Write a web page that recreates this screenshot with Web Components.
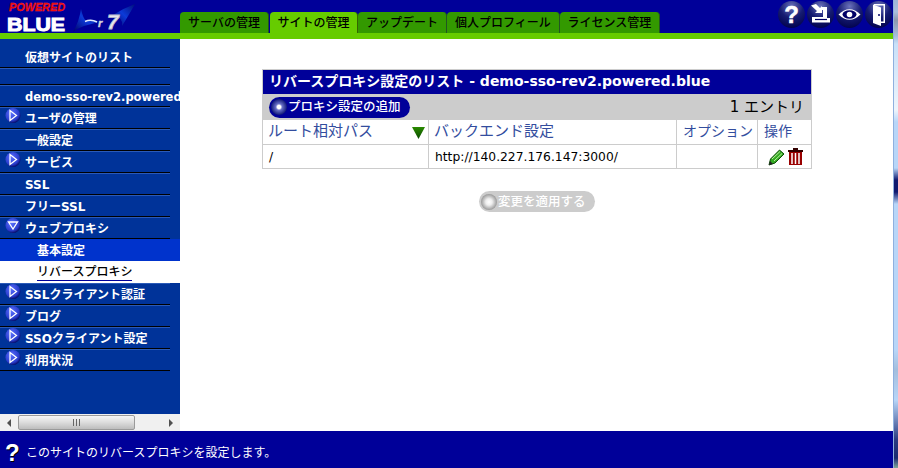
<!DOCTYPE html>
<html lang="ja">
<head>
<meta charset="utf-8">
<title>Powered Blue</title>
<style>
    html, body { margin: 0; height: 100%; overflow: hidden; background: #fff; }
    body { font-family: "DejaVu Sans", "Noto Sans CJK JP", sans-serif; font-size: 12px; }
</style>
</head>
<body>
<pb-app>
    <pb-header slot="header">
        <pb-tab>サーバの管理</pb-tab>
        <pb-tab active width="88">サイトの管理</pb-tab>
        <pb-tab>アップデート</pb-tab>
        <pb-tab width="113">個人プロフィール</pb-tab>
        <pb-tab width="100">ライセンス管理</pb-tab>
    </pb-header>
    <pb-nav slot="nav">
        <pb-nav-item height="29" pad="0">仮想サイトのリスト</pb-nav-item>
        <pb-nav-item height="17"></pb-nav-item>
        <pb-nav-item latin>demo-sso-rev2.powered.blue</pb-nav-item>
        <pb-nav-item arrow="right">ユーザの管理</pb-nav-item>
        <pb-nav-item>一般設定</pb-nav-item>
        <pb-nav-item arrow="right">サービス</pb-nav-item>
        <pb-nav-item>SSL</pb-nav-item>
        <pb-nav-item>フリーSSL</pb-nav-item>
        <pb-nav-item arrow="down">ウェブプロキシ</pb-nav-item>
        <pb-nav-item sub="current">基本設定</pb-nav-item>
        <pb-nav-item sub="selected">リバースプロキシ</pb-nav-item>
        <pb-nav-item arrow="right">SSLクライアント認証</pb-nav-item>
        <pb-nav-item arrow="right">ブログ</pb-nav-item>
        <pb-nav-item arrow="right">SSOクライアント設定</pb-nav-item>
        <pb-nav-item arrow="right">利用状況</pb-nav-item>
    </pb-nav>
    <pb-proxy-list slot="main"></pb-proxy-list>
    <pb-footer slot="footer">このサイトのリバースプロキシを設定します。</pb-footer>
</pb-app>

<script>
class PbApp extends HTMLElement {
    constructor() {
        super()
        this.attachShadow({ mode: 'open' })
        this.shadowRoot.innerHTML = `
            <style>
                :host { display: flex; width: 898px; height: 468px; overflow: hidden; }
                .page { width: 893px; display: flex; flex-direction: column; }
                .middle { flex: 1; display: flex; min-height: 0; }
                .strip {
                    width: 4px;
                    border-left: 1px solid #8fb0de;
                    background: linear-gradient(#9cb4d6 0, #a9bedc 12px, #8d97ad 20px, #a6bddc 36px, #c8e0f8 44px, #eef5fc 110px, #b8d6f8 122px, #b8d6f8 168px, #101a70 180px, #101a70 192px, #b8d6f8 204px, #b8d6f8 350px, #a3bedd 370px, #b8d6f8 400px, #2a3a80 440px, #1a2a70 458px, #7fa898 468px);
                }
            </style>
            <div class="page">
                <slot name="header"></slot>
                <div class="middle">
                    <slot name="nav"></slot>
                    <slot name="main"></slot>
                </div>
                <slot name="footer"></slot>
            </div>
            <div class="strip"></div>
        `
    }
}

class PbHeader extends HTMLElement {
    constructor() {
        super()
        this.attachShadow({ mode: 'open' })
        this.shadowRoot.innerHTML = `
            <style>
                :host { display: block; flex: none; background: #000099; border-bottom: 6px solid #66cc00; }
                .bar { height: 33px; display: flex; align-items: flex-end; }
                .logo { width: 180px; height: 33px; flex: none; display: block; }
                .tabs { display: flex; flex: 1; }
                .tools { display: flex; gap: 2px; padding: 0 1px 5px 0; align-self: flex-end; }
            </style>
            <div class="bar">
                <svg class="logo" viewBox="0 0 180 33">
                    <defs>
                        <linearGradient id="swoosh" x1="0" y1="1" x2="1" y2="0">
                            <stop offset="0" stop-color="#000066"/>
                            <stop offset=".5" stop-color="#0c3ad8"/>
                            <stop offset="1" stop-color="#00107a"/>
                        </linearGradient>
                    </defs>
                    <path d="M73 32 Q79 22 81 9 Q83 18 86 21 Q92 18 99 22 L84 26 Q78 28 73 32Z" fill="url(#swoosh)"/>
                    <path d="M113 15 Q124 8 135 4 Q130 13 122 26 Q124 18 113 15Z" fill="url(#swoosh)"/>
                    <path d="M85 21.500 Q91 19 97 22" stroke="#dfeaff" stroke-width="1.500" fill="none"/>
                    <text x="9" y="10.500" font-family="Liberation Sans" font-size="10.500" font-weight="700" font-style="italic" fill="#e80000" stroke="#ff3030" stroke-width=".3" textLength="56" lengthAdjust="spacingAndGlyphs">POWERED</text>
                    <text x="7" y="30.500" font-family="Liberation Sans" font-size="19" font-weight="700" fill="#fff" stroke="#fff" stroke-width="1" textLength="58" lengthAdjust="spacingAndGlyphs">BLUE</text>
                    <text x="98" y="27" font-family="Liberation Sans" font-size="11" font-weight="700" font-style="italic" fill="#d4d4dc" stroke="#d4d4dc" stroke-width=".4">r</text>
                    <text x="107" y="29" font-family="Liberation Sans" font-size="21" font-weight="700" font-style="italic" fill="#e8e8ee" stroke="#c0c0d0" stroke-width=".8">7</text>
                </svg>
                <div class="tabs"><slot></slot></div>
                <div class="tools">
                    <pb-tool kind="help"></pb-tool>
                    <pb-tool kind="install"></pb-tool>
                    <pb-tool kind="eye"></pb-tool>
                    <pb-tool kind="door"></pb-tool>
                </div>
            </div>
        `
    }
}

class PbTab extends HTMLElement {
    constructor() {
        super()
        this.attachShadow({ mode: 'open' })
        this.shadowRoot.innerHTML = `
            <style>
                :host {
                    display: flex; align-items: center; justify-content: center; box-sizing: border-box;
                    width: 89px; height: 21px; background: #339900; color: #000;
                    border-radius: 4px 4px 0 0; border-right: 1px solid #225522;
                    font-size: 12px; line-height: 16px; white-space: nowrap; font-weight: 500;
                }
                :host([active]) { background: #66cc00; border-right-color: #336600; margin-left: 1px; }
            </style>
            <slot></slot>
        `
    }

    connectedCallback() {
        if( this.hasAttribute('width') )
            this.style.width = this.getAttribute('width') + 'px'
    }
}

const TOOL_ICONS = {
    help: `<text x="13.500" y="22" text-anchor="middle" font-family="Liberation Sans" font-size="24" font-weight="700" fill="#fff" stroke="#fff" stroke-width=".5">?</text>`,
    install: `<path d="M4 4.500 L9 3 L13 7 L15 5 L15 12 L8 12 L10 10Z" fill="#fff"/><path d="M15 6h5v11h3v4.500H5V16h11V9h-1Z" fill="#fff"/><path d="M8 18.500h12" stroke="#000066" stroke-width="1.200"/>`,
    eye: `<path d="M2.500 13.500 Q13.500 3 24.500 13.500 Q13.500 24 2.500 13.500Z" fill="#fff"/><ellipse cx="13.500" cy="13.500" rx="7" ry="4.200" fill="#000066"/><circle cx="13.500" cy="13.500" r="2.800" fill="#fff"/>`,
    door: `<path d="M9 3h11v19H16v-1.500h2.500V4.500H9Z" fill="#fff"/><path d="M8 3.500 L16 6.500 V25 L8 22Z" fill="#fff"/><circle cx="14" cy="14" r="1" fill="#000066"/>`
}

class PbTool extends HTMLElement {
    constructor() {
        super()
        this.attachShadow({ mode: 'open' })
    }

    connectedCallback() {
        const kind = this.getAttribute('kind')
        this.shadowRoot.innerHTML = `
            <style>
                :host { display: block; width: 27px; height: 27px; }
                svg { display: block; }
            </style>
            <svg width="27" height="27" viewBox="0 0 27 27">
                <defs>
                    <radialGradient id="ball" cx=".5" cy=".2" r=".85">
                        <stop offset="0" stop-color="#6a72bc"/>
                        <stop offset=".5" stop-color="#161c72"/>
                        <stop offset="1" stop-color="#00004a"/>
                    </radialGradient>
                </defs>
                <circle cx="13.500" cy="13.500" r="13.500" fill="url(#ball)"/>
                ${TOOL_ICONS[kind]}
            </svg>
        `
    }
}

class PbNav extends HTMLElement {
    constructor() {
        super()
        this.attachShadow({ mode: 'open' })
        this.shadowRoot.innerHTML = `
            <style>
                :host { display: flex; flex-direction: column; flex: none; width: 180px; background: #003399; }
                .items { flex: 1; min-height: 0; overflow: hidden; }
                .scroll {
                    height: 17px; flex: none; background: #f0f0f0; display: flex; align-items: center;
                    box-sizing: border-box;
                }
                .btn { width: 18px; height: 17px; display: flex; align-items: center; justify-content: center; flex: none; }
                .thumb {
                    width: 117px; height: 15px; box-sizing: border-box; border: 1px solid #9a9a9a; border-radius: 2px;
                    background: linear-gradient(#f6f6f6, #dcdcdc 50%, #bdbdbd);
                    display: flex; align-items: center; justify-content: center;
                }
                .track { flex: 1; }
            </style>
            <div class="items"><slot></slot></div>
            <div class="scroll">
                <div class="btn"><svg width="5" height="8"><path d="M4 0v8L0 4Z" fill="#505050"/></svg></div>
                <div class="thumb"><svg width="8" height="7"><path d="M.5 0v7M3.500 0v7M6.500 0v7" stroke="#666"/></svg></div>
                <div class="track"></div>
                <div class="btn"><svg width="5" height="8"><path d="M0 0v8L4 4Z" fill="#505050"/></svg></div>
            </div>
        `
    }
}

class PbNavItem extends HTMLElement {
    constructor() {
        super()
        this.attachShadow({ mode: 'open' })
    }

    connectedCallback() {
        const arrow = this.getAttribute('arrow')
        const height = this.getAttribute('height') || 22
        const shape = arrow == 'down' ? 'M4.500 5h9L9 12Z' : 'M6 3.500v10L12.500 8.500Z'
        this.style.height = height + 'px'
        this.shadowRoot.innerHTML = `
            <style>
                :host {
                    display: block; position: relative; box-sizing: border-box; overflow: hidden;
                    color: #fff; font-weight: 700; font-size: 12px; line-height: 16px; white-space: nowrap;
                }
                :host([latin]) { font-size: 11.500px; }
                .row {
                    height: 100%; box-sizing: border-box; padding: 2px 0 0 25px;
                    display: flex; align-items: center;
                }
                :host(:not([sub]))::after {
                    content: ''; position: absolute; left: 0; bottom: 0; width: 170px; height: 1px; background: #000;
                }
                :host(:not([sub]))::before {
                    content: ''; position: absolute; left: 0; top: 0; width: 170px; height: 1px; background: #2a5ab8;
                }
                :host([pad])::before { display: none; }
                :host([pad]) .row { align-items: flex-end; padding-bottom: 2px; }
                :host([sub="current"]) { background: #0033cc; }
                :host([sub="selected"]) { background: #fff; color: #000; font-weight: 500; }
                :host([sub]) .row { padding-left: 37px; }
                :host([sub="selected"]) span { border-bottom: 1px solid #000099; line-height: 15px; }
                .ball { position: absolute; left: 4px; top: 0; }
            </style>
            ${arrow ? `<svg class="ball" width="18" height="18" viewBox="0 0 18 18">
                <defs>
                    <radialGradient id="b" cx=".4" cy=".35" r=".7">
                        <stop offset="0" stop-color="#5a70ff"/>
                        <stop offset=".7" stop-color="#2a3ccc"/>
                        <stop offset="1" stop-color="#000055"/>
                    </radialGradient>
                </defs>
                <circle cx="9" cy="8.500" r="7.500" fill="url(#b)"/>
                <path d="${shape}" fill="none" stroke="#fff" stroke-width="1.300"/>
            </svg>` : ''}
            <div class="row"><span><slot></slot></span></div>
        `
    }
}

class PbPill extends HTMLElement {
    constructor() {
        super()
        this.attachShadow({ mode: 'open' })
        this.shadowRoot.innerHTML = `
            <style>
                :host {
                    display: inline-flex; align-items: center; box-sizing: border-box; height: 21px;
                    border-radius: 11px; background: #000099; color: #fff; padding: 0 9px 0 1px; gap: 0;
                    font-size: 12.500px; line-height: 16px; font-weight: 500; white-space: nowrap;
                }
                :host([disabled]) { background: #cccccc; }
                svg { flex: none; display: block; }
            </style>
            <svg width="18" height="18" viewBox="0 0 18 18">
                <defs>
                    <radialGradient id="g" cx=".5" cy=".5" r=".5">
                        <stop offset="0" stop-color="#fff"/>
                        <stop offset=".22" stop-color="#fff"/>
                        <stop offset=".4" stop-color="#6a72c8"/>
                        <stop offset="1" stop-color="#101878"/>
                    </radialGradient>
                    <radialGradient id="gd" cx=".5" cy=".5" r=".5">
                        <stop offset="0" stop-color="#fff"/>
                        <stop offset=".4" stop-color="#eee"/>
                        <stop offset="1" stop-color="#999"/>
                    </radialGradient>
                </defs>
                <circle cx="9" cy="9" r="8" fill="url(#${this.hasAttribute('disabled') ? 'gd' : 'g'})"/>
            </svg>
            <slot></slot>
        `
    }
}

class PbProxyList extends HTMLElement {
    constructor() {
        super()
        this.attachShadow({ mode: 'open' })
        this.shadowRoot.innerHTML = `
            <style>
                :host {
                    display: flex; flex-direction: column; align-items: flex-start; flex: 1; background: #fff;
                    padding: 30px 0 0 82px; box-sizing: border-box; min-width: 0;
                }
                table { width: 549px; border-collapse: collapse; table-layout: fixed; }
                th, td { padding: 0; border: 1px solid #cccccc; box-sizing: border-box; line-height: 16px; }
                .title th {
                    height: 25px; background: #000099; color: #fff; text-align: left; font-size: 14px;
                    font-weight: 700; padding: 0 0 2px 6px; white-space: nowrap;
                }
                .tools td { height: 25px; background: #cccccc; padding: 0 7px 0 6px; }
                .tools div { display: flex; justify-content: space-between; align-items: center; }
                .count { font-size: 15px; color: #000; }
                .head th { height: 25px; text-align: left; font-weight: 400; font-size: 15px; color: #334d9e; padding: 0 0 3px 5px; white-space: nowrap; }
                .head th div { display: flex; justify-content: space-between; align-items: center; padding-right: 3px; }
                .head th svg { position: relative; top: 2px; }
                .head .op { font-size: 14px; padding-left: 6px; }
                .body td { height: 24px; font-size: 12.300px; color: #000; padding-left: 6px; }
                .actions { display: flex; gap: 2px; align-items: center; padding-left: 4px; }
                svg { display: block; }
                .apply { margin: 22px 0 0 217px; }
            </style>
            <table>
                <colgroup><col style="width:166px"><col style="width:248px"><col style="width:81px"><col style="width:54px"></colgroup>
                <tr class="title"><th colspan="4">リバースプロキシ設定のリスト - demo-sso-rev2.powered.blue</th></tr>
                <tr class="tools"><td colspan="4"><div><pb-pill>プロキシ設定の追加</pb-pill><span class="count">1 エントリ</span></div></td></tr>
                <tr class="head">
                    <th><div>ルート相対パス<svg width="13" height="12"><defs><linearGradient id="tri" x1="0" y1="0" x2="0" y2="1"><stop offset="0" stop-color="#2a8a00"/><stop offset="1" stop-color="#0a4a00"/></linearGradient></defs><path d="M0 0h13L6.500 12Z" fill="url(#tri)"/></svg></div></th>
                    <th>バックエンド設定</th>
                    <th class="op">オプション</th>
                    <th class="op">操作</th>
                </tr>
                <tr class="body">
                    <td>/</td>
                    <td>http://140.227.176.147:3000/</td>
                    <td></td>
                    <td><div class="actions">
                        <svg width="17" height="18" viewBox="0 0 17 18"><path d="M1 17 L2.500 11 L11.500 2 L16 6 L7 15Z" fill="#33aa22" stroke="#0d4d08"/><path d="M4 11 L12 3.500M6 13 L14 5.500" stroke="#bdf0a0"/><path d="M1 17 L2 13 L5 16Z" fill="#222"/></svg>
                        <svg width="17" height="19" viewBox="0 0 17 19"><path d="M1 3h15v2H1ZM6 1h5v2H6Z" fill="#330000"/><path d="M2 5h13v13H2Z" fill="#990000"/><path d="M5 6v11M8.500 6v11M12 6v11" stroke="#fff" stroke-width="1.500"/></svg>
                    </div></td>
                </tr>
            </table>
            <pb-pill class="apply" disabled>変更を適用する</pb-pill>
        `
    }
}

class PbFooter extends HTMLElement {
    constructor() {
        super()
        this.attachShadow({ mode: 'open' })
        this.shadowRoot.innerHTML = `
            <style>
                :host {
                    display: flex; align-items: center; flex: none; height: 37px; background: #000099; color: #fff;
                    font-size: 12px; line-height: 16px; padding: 7px 0 0 5px; box-sizing: border-box; gap: 7px;
                }
                .mark { font-family: "Liberation Sans", sans-serif; font-size: 24px; font-weight: 700; text-shadow: 1px 1px 0 #000; width: 14px; line-height: 20px; }
            </style>
            <span class="mark">?</span>
            <span><slot></slot></span>
        `
    }
}

customElements.define('pb-app', PbApp)
customElements.define('pb-header', PbHeader)
customElements.define('pb-tab', PbTab)
customElements.define('pb-tool', PbTool)
customElements.define('pb-nav', PbNav)
customElements.define('pb-nav-item', PbNavItem)
customElements.define('pb-pill', PbPill)
customElements.define('pb-proxy-list', PbProxyList)
customElements.define('pb-footer', PbFooter)
</script>
</body>
</html>
